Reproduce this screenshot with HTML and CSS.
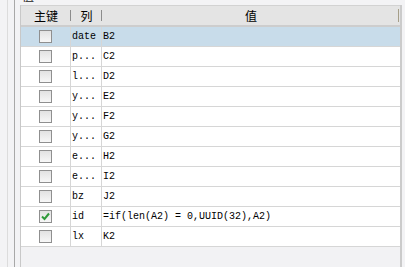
FILE: index.html
```html
<!DOCTYPE html>
<html>
<head>
    <title>列映射</title>
    <link rel="stylesheet" href="styles.css">
</head>
<body>
    <div class="outer">
        <div class="inner">
            <div class="caption"><span>值</span></div>

            <div class="grid">
                <div class="grid-head">
                    <div class="hcell">主键</div>
                    <div class="hcell">列</div>
                    <div class="hcell last">值</div>
                </div>

                <div class="row selected">
                    <div class="cell check"><span class="box"></span></div>
                    <div class="cell">date</div>
                    <div class="cell">B2</div>
                </div>
                <div class="row">
                    <div class="cell check"><span class="box"></span></div>
                    <div class="cell">p...</div>
                    <div class="cell">C2</div>
                </div>
                <div class="row">
                    <div class="cell check"><span class="box"></span></div>
                    <div class="cell">l...</div>
                    <div class="cell">D2</div>
                </div>
                <div class="row">
                    <div class="cell check"><span class="box"></span></div>
                    <div class="cell">y...</div>
                    <div class="cell">E2</div>
                </div>
                <div class="row">
                    <div class="cell check"><span class="box"></span></div>
                    <div class="cell">y...</div>
                    <div class="cell">F2</div>
                </div>
                <div class="row">
                    <div class="cell check"><span class="box"></span></div>
                    <div class="cell">y...</div>
                    <div class="cell">G2</div>
                </div>
                <div class="row">
                    <div class="cell check"><span class="box"></span></div>
                    <div class="cell">e...</div>
                    <div class="cell">H2</div>
                </div>
                <div class="row">
                    <div class="cell check"><span class="box"></span></div>
                    <div class="cell">e...</div>
                    <div class="cell">I2</div>
                </div>
                <div class="row">
                    <div class="cell check"><span class="box"></span></div>
                    <div class="cell">bz</div>
                    <div class="cell">J2</div>
                </div>
                <div class="row">
                    <div class="cell check">
                        <span class="box checked">
                            <svg width="11" height="11" viewBox="0 0 11 11">
                                <path d="M2 5.5 L4.5 8 L9 2.5" fill="none" stroke="#2f9a3a" stroke-width="2"/>
                            </svg>
                        </span>
                    </div>
                    <div class="cell">id</div>
                    <div class="cell">=if(len(A2) = 0,UUID(32),A2)</div>
                </div>
                <div class="row">
                    <div class="cell check"><span class="box"></span></div>
                    <div class="cell">lx</div>
                    <div class="cell">K2</div>
                </div>
            </div>
        </div>
    </div>
</body>
</html>
```

FILE: styles.css
```css
html, body {
    height: 100%;
}
body {
    margin: 0;
    background-color: #f3f3f5;
    font-family: "Noto Sans CJK SC", sans-serif;
    overflow: hidden;
}
.outer {
    height: 100%;
    margin-left: 7px;
    border-left: 1px solid #dcdcdc;
}
.inner {
    height: 100%;
    margin-left: 6px;
    border-left: 1px solid #a8a8a8;
}
.caption {
    height: 5px;
    overflow: hidden;
    padding-left: 7px;
    font-size: 12px;
    color: #222;
}
.caption span {
    display: block;
    margin-top: -12px;
    line-height: 16px;
}
.grid {
    height: 100%;
    margin-left: 5px;
    margin-right: 3px;
    border-left: 1px solid #c8c8c8;
    border-right: 2px solid #cbcbcb;
    background-color: #f2f2f4;
}
.grid-head,
.row {
    display: grid;
    grid-template-columns: 50px 31px 1fr;
}
.grid-head {
    height: 19px;
    background-color: #e4e4e4;
    border-top: 1px solid #d2d2d2;
    border-bottom: 2px solid #cdcdcd;
}
.hcell {
    position: relative;
    text-align: center;
    font-size: 12px;
    line-height: 19px;
    color: #000;
}
.hcell::after {
    content: "";
    position: absolute;
    right: 0;
    top: 4px;
    height: 11px;
    border-right: 1px solid #8c8c8c;
}
.hcell.last::after {
    top: 3px;
    height: 13px;
    right: 1px;
    border-right-color: #a59e88;
}
.row {
    height: 19px;
    background-color: #fff;
    border-bottom: 1px solid #d6d6d6;
}
.row.selected {
    background-color: #c8dcea;
}
.cell {
    border-right: 1px solid #d6d6d6;
    padding-left: 1px;
    font-family: "Liberation Mono", monospace;
    font-size: 10px;
    line-height: 19px;
    color: #000;
    white-space: nowrap;
    overflow: hidden;
}
.cell:last-child {
    border-right: none;
}
.cell.check {
    display: flex;
    justify-content: center;
    align-items: center;
    padding-left: 0;
}
.box {
    width: 11px;
    height: 11px;
    border: 1px solid #8f8f8f;
    background: linear-gradient(#e2e2e2, #f7f7f7);
    display: flex;
    align-items: center;
    justify-content: center;
}
```
